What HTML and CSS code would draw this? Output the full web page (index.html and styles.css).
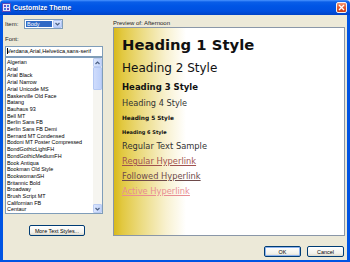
FILE: index.html
```html
<!DOCTYPE html>
<html lang="en">
<head>
<meta charset="UTF-8" />
<title>Customize Theme</title>
<link rel="stylesheet" href="styles.css">
</head>
<body>
<div class="window">
  <div class="titlebar">
    <svg class="app-icon" width="9" height="9" viewBox="0 0 9 9">
      <rect x="0.5" y="0.5" width="8" height="8" fill="#e8e4f8" stroke="#5a48b8" />
      <rect x="2" y="2" width="2" height="2" fill="#6a4cc8" />
      <rect x="5" y="2" width="2" height="2" fill="#3c7ce0" />
      <rect x="2" y="5" width="2" height="2" fill="#3c7ce0" />
      <rect x="5" y="5" width="2" height="2" fill="#6a4cc8" />
    </svg>
    <span class="title">Customize Theme</span>
    <span class="close-btn">
      <svg width="7" height="7" viewBox="0 0 7 7"><path d="M1 1L6 6M6 1L1 6" stroke="#fff" stroke-width="1.4" /></svg>
    </span>
  </div>

  <div class="frame">
    <div class="main">
      <div class="left-col">
        <div class="item-row">
          <span class="label">Item:</span>
          <div class="combo">
            <span class="combo-value">Body</span>
            <span class="combo-arrow">
              <svg width="5" height="4" viewBox="0 0 5 4"><path d="M0.5 1L2.5 3L4.5 1" fill="none" stroke="#4d6185" stroke-width="1.2" /></svg>
            </span>
          </div>
        </div>
        <div class="label font-label">Font:</div>
        <div class="text-input"><span class="caret"></span>Verdana,Arial,Helvetica,sans-serif</div>
        <div class="listbox">
          <ul class="font-list">
            <li>Algerian</li>
            <li>Arial</li>
            <li>Arial Black</li>
            <li>Arial Narrow</li>
            <li>Arial Unicode MS</li>
            <li>Baskerville Old Face</li>
            <li>Batang</li>
            <li>Bauhaus 93</li>
            <li>Bell MT</li>
            <li>Berlin Sans FB</li>
            <li>Berlin Sans FB Demi</li>
            <li>Bernard MT Condensed</li>
            <li>Bodoni MT Poster Compressed</li>
            <li>BondGothicLightFH</li>
            <li>BondGothicMediumFH</li>
            <li>Book Antiqua</li>
            <li>Bookman Old Style</li>
            <li>BookwomanSH</li>
            <li>Britannic Bold</li>
            <li>Broadway</li>
            <li>Brush Script MT</li>
            <li>Californian FB</li>
            <li>Centaur</li>
          </ul>
          <div class="scrollbar">
            <span class="scroll-btn">
              <svg width="5" height="4" viewBox="0 0 5 4"><path d="M0.5 3L2.5 1L4.5 3" fill="none" stroke="#4d6185" stroke-width="1.2" /></svg>
            </span>
            <span class="scroll-thumb"></span>
            <span class="scroll-track"></span>
            <span class="scroll-btn">
              <svg width="5" height="4" viewBox="0 0 5 4"><path d="M0.5 1L2.5 3L4.5 1" fill="none" stroke="#4d6185" stroke-width="1.2" /></svg>
            </span>
          </div>
        </div>
        <button class="xp-btn more-btn">More Text Styles...</button>
      </div>

      <div class="right-col">
        <div class="label preview-label">Preview of: Afternoon</div>
        <div class="preview">
          <div class="pv-h1">Heading 1 Style</div>
          <div class="pv-h2">Heading 2 Style</div>
          <div class="pv-h3">Heading 3 Style</div>
          <div class="pv-h4">Heading 4 Style</div>
          <div class="pv-h5">Heading 5 Style</div>
          <div class="pv-h6">Heading 6 Style</div>
          <div class="pv-text">Regular Text Sample</div>
          <div class="pv-text"><a class="link-regular">Regular Hyperlink</a></div>
          <div class="pv-text"><a class="link-followed">Followed Hyperlink</a></div>
          <div class="pv-text"><a class="link-active">Active Hyperlink</a></div>
        </div>
      </div>
    </div>

    <div class="actions">
      <button class="xp-btn default-btn">OK</button>
      <button class="xp-btn">Cancel</button>
    </div>
  </div>
</div>
</body>
</html>
```

FILE: styles.css
```css
* {
  box-sizing: border-box;
}
body {
  margin: 0;
  font-family: 'Liberation Sans', Arial, sans-serif;
  color: #000;
}
.window {
  width: 350px;
  height: 262px;
  display: flex;
  flex-direction: column;
  background: #ece9d8;
}
/* Title bar */
.titlebar {
  height: 15px;
  flex: none;
  display: flex;
  align-items: center;
  padding: 0 3px 0 2px;
  background: linear-gradient(#4a94ff 0, #0a5ee8 2px, #0055e5 6px, #0050e0 11px, #0043c6 15px);
  border-radius: 4px 4px 0 0;
}
.app-icon {
  margin-right: 2px;
}
.title {
  flex: 1;
  color: #fff;
  font-weight: bold;
  font-size: 6.8px;
  text-shadow: 1px 1px 0 #0b3a99;
}
.close-btn {
  width: 11px;
  height: 11px;
  border: 1px solid #f4f4f4;
  border-radius: 2px;
  background: linear-gradient(#f39a78, #e0582e 50%, #c9411a);
  display: flex;
  align-items: center;
  justify-content: center;
}
/* Dialog frame */
.frame {
  flex: 1;
  display: flex;
  flex-direction: column;
  border: 3px solid #0054e3;
  border-top: none;
  padding: 4px 2px 3px 2px;
}
.main {
  flex: 1;
  display: flex;
  gap: 10px;
}
.left-col {
  width: 98px;
  display: flex;
  flex-direction: column;
}
.right-col {
  flex: 1;
  display: flex;
  flex-direction: column;
}
.label {
  font-size: 6px;
  color: #222;
}
.item-row {
  height: 10px;
  display: flex;
  align-items: center;
}
.item-row .label {
  width: 19px;
}
.combo {
  width: 39px;
  height: 10px;
  display: flex;
  border: 1px solid #7f9db9;
  background: #fff;
}
.combo-value {
  flex: 1;
  margin: 1px;
  padding-left: 1px;
  background: #316ac5;
  color: #fff;
  font-size: 5.5px;
  line-height: 6px;
}
.combo-arrow {
  width: 9px;
  display: flex;
  align-items: center;
  justify-content: center;
  background: linear-gradient(#dbe6fe, #b9cdfa);
  border: 1px solid #b1c6f4;
  border-radius: 1px;
}
.font-label {
  margin-top: 5px;
  line-height: 10px;
}
.text-input {
  margin-top: 2px;
  height: 11px;
  border: 1px solid #7f9db9;
  background: #fff;
  font-size: 5.6px;
  line-height: 9px;
  padding-left: 1px;
  white-space: nowrap;
  overflow: hidden;
}
.caret {
  display: inline-block;
  width: 1px;
  height: 6px;
  background: #000;
  margin-right: -1px;
  vertical-align: -1px;
}
/* Font list */
.listbox {
  height: 157px;
  display: flex;
  border: 1px solid #7f9db9;
  background: #fff;
}
.font-list {
  flex: 1;
  margin: 0;
  padding: 1px 0 0 1px;
  list-style: none;
  overflow: hidden;
  font-size: 5.4px;
  line-height: 6.7px;
  white-space: nowrap;
}
.scrollbar {
  width: 9px;
  display: flex;
  flex-direction: column;
  background: #f6f5f0;
}
.scroll-btn {
  height: 9px;
  flex: none;
  display: flex;
  align-items: center;
  justify-content: center;
  background: linear-gradient(to right, #dbe6fe, #c3d4fb);
  border: 1px solid #bccdf3;
  border-radius: 1px;
}
.scroll-thumb {
  height: 23px;
  flex: none;
  background: linear-gradient(to right, #cfdcfc, #bdd0fa);
  border: 1px solid #b4c8f3;
  border-radius: 1px;
}
.scroll-track {
  flex: 1;
}
/* Buttons */
.xp-btn {
  height: 11px;
  padding: 0;
  font-family: 'Liberation Sans', Arial, sans-serif;
  font-size: 5.4px;
  color: #000;
  border: 1px solid #003c74;
  border-radius: 2px;
  background: linear-gradient(#fff, #f3f2ec 70%, #dcd9cb);
}
.more-btn {
  width: 56px;
  margin: 11px 0 0 24px;
}
.actions {
  height: 11px;
  margin-top: 10px;
  flex: none;
  display: flex;
  justify-content: flex-end;
  gap: 6px;
  padding-right: 1px;
}
.actions .xp-btn {
  width: 37px;
}
.default-btn {
  box-shadow: inset 0 0 0 1px #8eb3ee;
}
/* Preview pane */
.preview-label {
  line-height: 8px;
}
.preview {
  flex: 1;
  border: 1px solid #8a97a8;
  background: linear-gradient(to right, #d8b91c 0, #e2c840 8px, #ecdc84 28px, #f8f1d0 52px, #fff 72px);
  padding: 7px 0 0 8px;
  font-family: 'DejaVu Sans', Verdana, sans-serif;
  color: #111;
  white-space: nowrap;
}
.pv-h1 {
  font-size: 14.8px;
  font-weight: bold;
  line-height: 20px;
}
.pv-h2 {
  font-size: 12px;
  line-height: 22px;
  margin-top: 2px;
}
.pv-h3 {
  font-size: 8.5px;
  font-weight: bold;
  line-height: 16px;
}
.pv-h4 {
  font-size: 8.2px;
  line-height: 16px;
  color: #333;
}
.pv-h5 {
  font-size: 5.8px;
  font-weight: bold;
  line-height: 15px;
}
.pv-h6 {
  font-size: 5px;
  font-weight: bold;
  line-height: 13px;
}
.pv-text {
  font-size: 8.3px;
  line-height: 15px;
  color: #333;
}
.pv-text a {
  text-decoration: underline;
}
.link-regular {
  color: #a0524f;
}
.link-followed {
  color: #6e4a4a;
}
.link-active {
  color: #e88d93;
}
```
